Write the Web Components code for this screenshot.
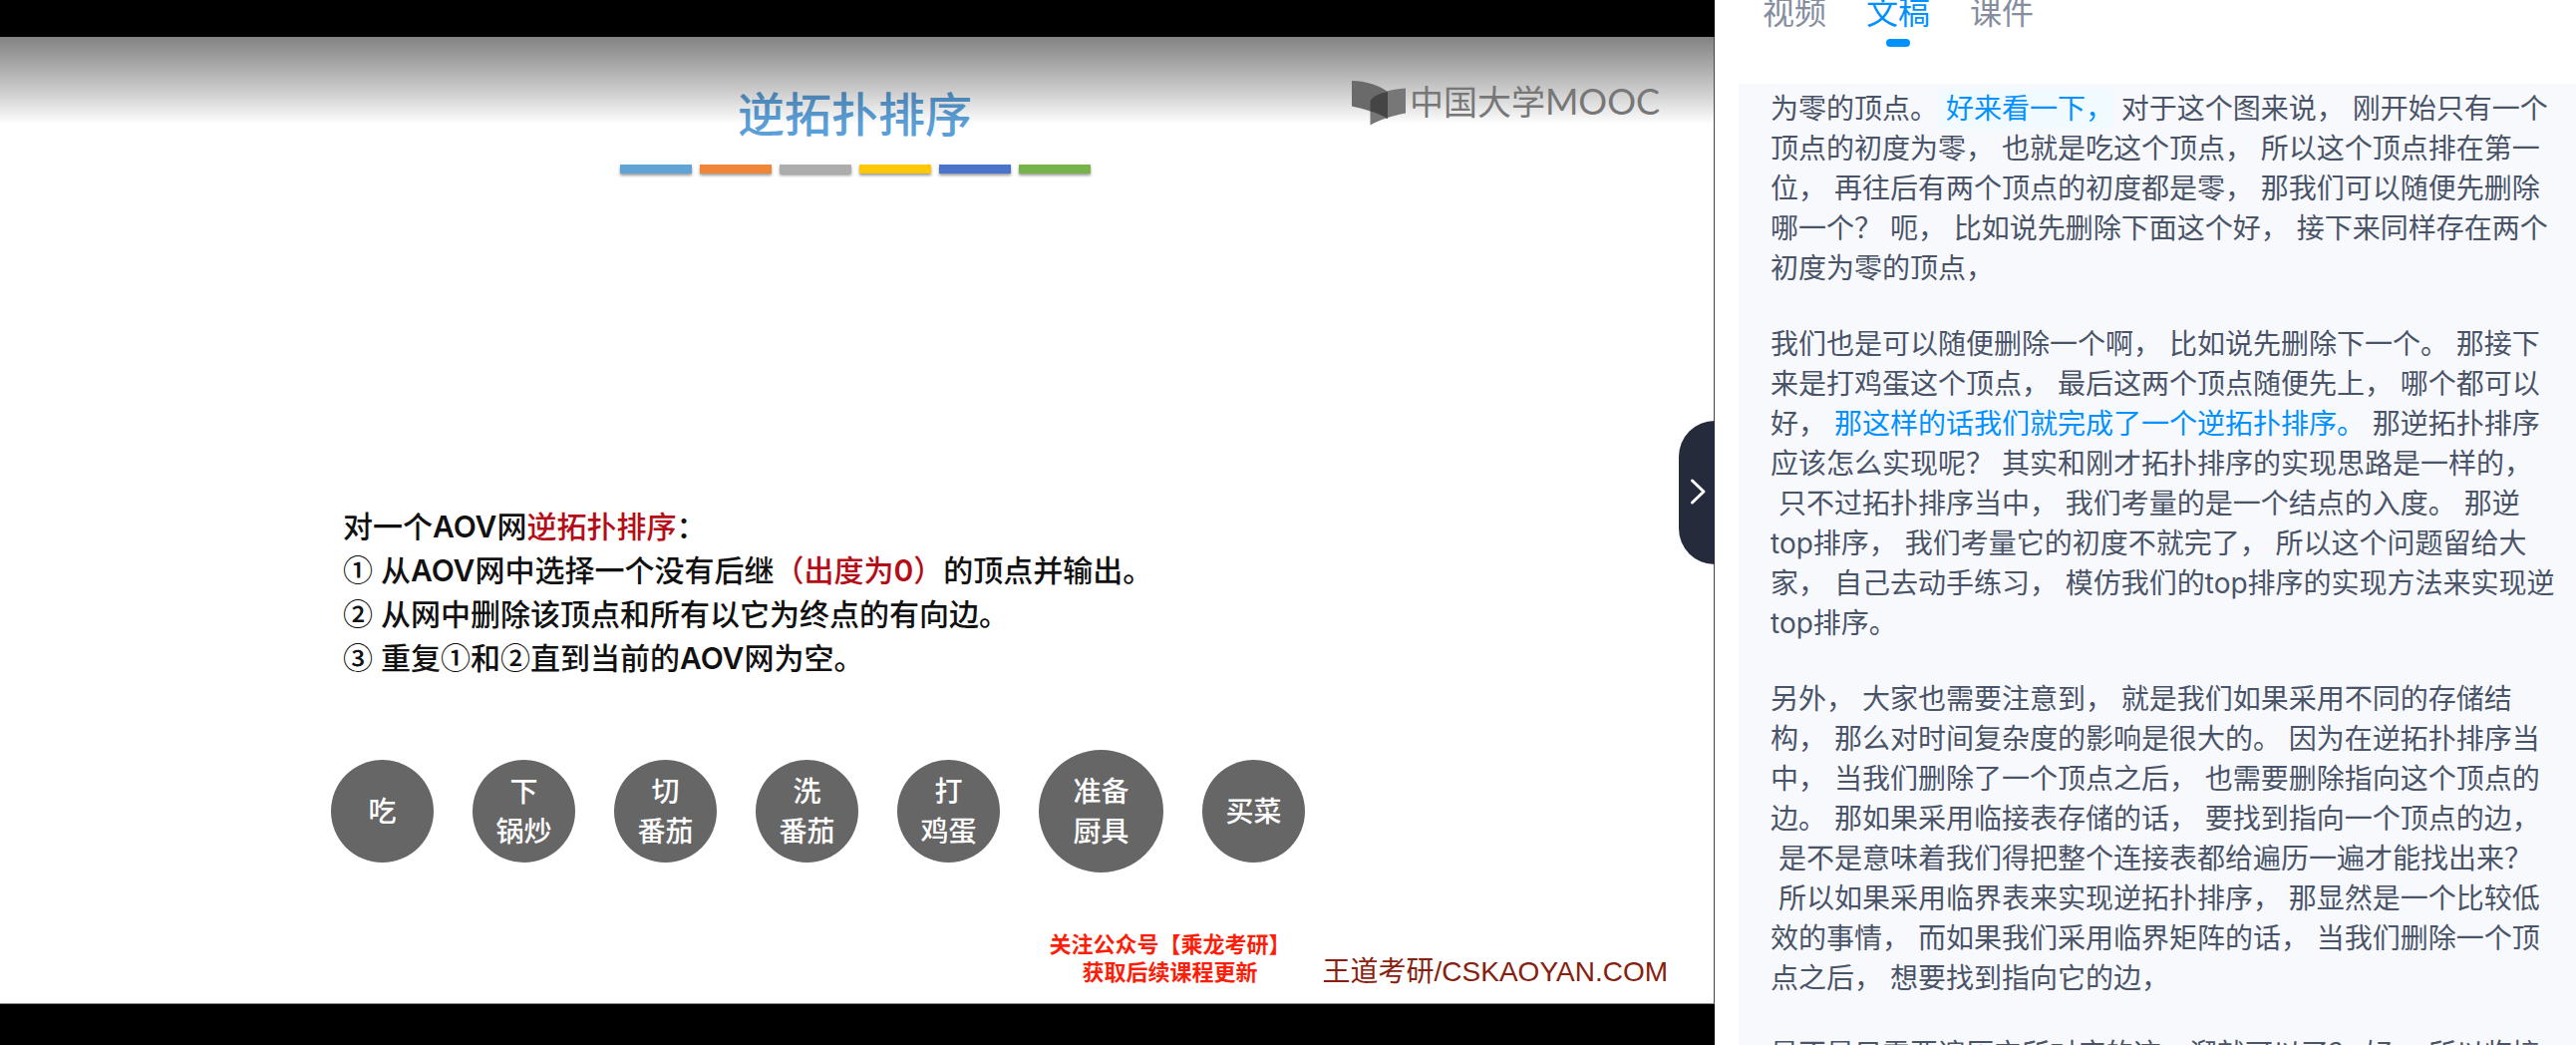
<!DOCTYPE html>
<html lang="zh-CN">
<head>
<meta charset="utf-8">
<title>逆拓扑排序</title>
<style>
  html, body { height: 100%; margin: 0; }
  body {
    overflow: hidden;
    background: #fff;
    font-family: Inter, "Noto Sans CJK SC", sans-serif;
    text-spacing-trim: space-all;
  }
</style>
</head>
<body>
<course-page>
  <lesson-player slot="player">
    <slide-title>逆拓扑排序</slide-title>
    <slide-steps></slide-steps>
    <node-row>
      <task-node>吃</task-node>
      <task-node>下<br>锅炒</task-node>
      <task-node>切<br>番茄</task-node>
      <task-node>洗<br>番茄</task-node>
      <task-node>打<br>鸡蛋</task-node>
      <task-node large>准备<br>厨具</task-node>
      <task-node>买菜</task-node>
    </node-row>
    <slide-footer></slide-footer>
    <mooc-logo slot="watermark"></mooc-logo>
    <collapse-handle slot="handle"></collapse-handle>
  </lesson-player>
  <side-tabs slot="side"></side-tabs>
  <transcript-panel slot="side"></transcript-panel>
</course-page>

<script>
const define = (name, html) => {
  const template = document.createElement('template');
  template.innerHTML = html;
  customElements.define(name, class extends HTMLElement {
    constructor() {
      super();
      this.attachShadow({ mode: 'open' }).append(template.content.cloneNode(true));
    }
  });
};

define('course-page', `
  <style>
    :host { display: grid; grid-template-columns: minmax(0, 1fr) 864px; height: 100vh; }
    main { display: flex; min-width: 0; }
    aside { display: flex; flex-direction: column; overflow: hidden; background: #fff; }
  </style>
  <main><slot name="player"></slot></main>
  <aside><slot name="side"></slot></aside>`);

define('lesson-player', `
  <style>
    :host { display: flex; flex: 1; position: relative; box-sizing: border-box; padding: 37px 0 41px; background: #000; }
    .slide {
      flex: 1; display: flex; flex-direction: column; position: relative;
      background: #fff; border-right: 1px solid #444; border-bottom: 1px solid #888;
    }
    .shade { position: absolute; inset: 0 0 auto; height: 88px; background: linear-gradient(rgba(0,0,0,.49), rgba(0,0,0,.2) 62%, rgba(0,0,0,0)); pointer-events: none; }
    .mark { position: absolute; top: 44px; right: 54px; }
    .handle { position: absolute; right: 0; top: 422px; }
  </style>
  <div class="slide">
    <slot></slot>
    <div class="shade"></div>
    <div class="mark"><slot name="watermark"></slot></div>
  </div>
  <div class="handle"><slot name="handle"></slot></div>`);

define('slide-title', `
  <style>
    :host { display: flex; flex-direction: column; align-items: center; gap: 22px; padding: 50px 4px 0 0; margin-bottom: auto; }
    h1 { margin: 0; font-size: 47px; line-height: 56px; font-weight: 500; color: #5b9fd8; }
    .bars { display: flex; gap: 8px; }
    .bars i { width: 72px; height: 9px; box-shadow: 0 2px 3px rgba(0,0,0,.4); }
  </style>
  <h1><slot></slot></h1>
  <div class="bars">
    <i style="background:#62a3d6"></i><i style="background:#ed8638"></i><i style="background:#adadad"></i>
    <i style="background:#fec707"></i><i style="background:#4a74c9"></i><i style="background:#77b34b"></i>
  </div>`);

define('slide-steps', `
  <style>
    :host { display: block; padding-left: 344px; font-size: 30px; line-height: 44px; font-weight: 500; color: #111; }
    p { margin: 0; white-space: nowrap; }
    b { font-weight: 600; }
    em { font-style: normal; color: #b30d17; }
    .n { font-family: "Noto Sans CJK SC", sans-serif; line-height: 30px; }
  </style>
  <p>对一个<b>AOV</b>网<em>逆拓扑排序</em>：</p>
  <p><span class="n">①</span> 从<b>AOV</b>网中选择一个没有后继<em>（出度为<b>0</b>）</em>的顶点并输出。</p>
  <p><span class="n">②</span> 从网中删除该顶点和所有以它为终点的有向边。</p>
  <p><span class="n">③</span> 重复<span class="n">①</span>和<span class="n">②</span>直到当前的<b>AOV</b>网为空。</p>`);

define('node-row', `
  <style>:host { display: flex; align-items: center; gap: 39px; padding: 70px 0 58px 332px; }</style>
  <slot></slot>`);

define('task-node', `
  <style>
    :host {
      display: flex; align-items: center; justify-content: center; flex: none;
      width: 103px; height: 103px; border-radius: 50%;
      background: #666; color: #fff; text-align: center;
      font-size: 28px; line-height: 40px; font-weight: 500;
    }
    :host([large]) { width: 125px; height: 123px; }
  </style>
  <span><slot></slot></span>`);

define('slide-footer', `
  <style>
    :host { display: flex; justify-content: flex-end; align-items: flex-end; gap: 32px; padding: 0 46px 17px 0; white-space: nowrap; }
    p { margin: 0; }
    .ad { font-size: 22px; line-height: 28px; font-weight: 700; text-align: center; color: #fb1e08; }
    .src { font-family: "Liberation Sans", "Noto Sans CJK SC", sans-serif; font-size: 28px; line-height: 28px; color: #86200f; }
  </style>
  <p class="ad">关注公众号【乘龙考研】<br>获取后续课程更新</p>
  <p class="src">王道考研/CSKAOYAN.COM</p>`);

define('mooc-logo', `
  <style>
    :host { display: flex; align-items: flex-start; gap: 4px; color: #777; font-family: "Noto Sans CJK SC", sans-serif; font-size: 34px; line-height: 40px; white-space: nowrap; }
    svg { display: block; width: 54px; height: 45px; }
    .en { font-family: Lato, sans-serif; font-size: 36px; line-height: 36px; }
  </style>
  <svg viewBox="0 0 54 45" aria-hidden="true">
    <path d="M0 0C14 0 26 4 36 11V38C25 32 13 28 0 25.500Z" fill="#6a6a6a"/>
    <path d="M18.500 20C25 11 39 9 54 7.500V32.500C40 35 28 39 18.500 44.500Z" fill="#777"/>
    <path d="M18.500 20C22 15 28 12.500 36 11V38C30 34.500 24 32 18.500 30.500Z" fill="#454545"/>
  </svg>
  <span>中国大学<span class="en">MOOC</span></span>`);

define('collapse-handle', `
  <style>
    :host { display: block; }
    button { display: flex; align-items: center; justify-content: center; width: 36px; height: 144px; padding: 0; border: 0; border-radius: 36px 0 0 36px; background: #252b3a; }
    svg { display: block; width: 24px; height: 30px; }
  </style>
  <button aria-label="收起">
    <svg viewBox="0 0 24 30" fill="none" stroke="#fff" stroke-width="3" stroke-linecap="round" stroke-linejoin="round"><path d="M7.500 3L19 14L7.500 25"/></svg>
  </button>`);

define('side-tabs', `
  <style>
    :host { display: flex; flex: none; gap: 40px; margin: -11px 0 37px; padding-left: 48px; }
    button { display: flex; flex-direction: column; align-items: center; gap: 2px; padding: 0; border: 0; background: none; font: inherit; font-size: 32px; line-height: 48px; color: #858d9e; }
    button::after { content: ""; width: 24px; height: 8px; border-radius: 4px; }
    .on { color: #0091ff; }
    .on::after { background: #0091ff; }
  </style>
  <button>视频</button><button class="on">文稿</button><button>课件</button>`);

define('transcript-panel', `
  <style>
    :host { display: flex; flex-direction: column; gap: 36px; flex: none; margin-left: 24px; padding: 5px 0 0 32px; background: #f8f9fd; font-size: 28px; line-height: 40px; color: #4a5468; }
    p { margin: 0; white-space: pre; }
    mark { background: none; color: #0091ff; }
    .hit { display: inline-block; background: #f1faff; }
  </style>
  <p>为零的顶点。<mark class="hit"> 好来看一下，</mark> 对于这个图来说， 刚开始只有一个
顶点的初度为零， 也就是吃这个顶点， 所以这个顶点排在第一
位， 再往后有两个顶点的初度都是零， 那我们可以随便先删除
哪一个？ 呃， 比如说先删除下面这个好， 接下来同样存在两个
初度为零的顶点，</p>
  <p>我们也是可以随便删除一个啊， 比如说先删除下一个。 那接下
来是打鸡蛋这个顶点， 最后这两个顶点随便先上， 哪个都可以
好，<mark> 那这样的话我们就完成了一个逆拓扑排序。</mark> 那逆拓扑排序
应该怎么实现呢？ 其实和刚才拓扑排序的实现思路是一样的，
 只不过拓扑排序当中， 我们考量的是一个结点的入度。 那逆
top排序， 我们考量它的初度不就完了， 所以这个问题留给大
家， 自己去动手练习， 模仿我们的top排序的实现方法来实现逆
top排序。</p>
  <p>另外， 大家也需要注意到， 就是我们如果采用不同的存储结
构， 那么对时间复杂度的影响是很大的。 因为在逆拓扑排序当
中， 当我们删除了一个顶点之后， 也需要删除指向这个顶点的
边。 那如果采用临接表存储的话， 要找到指向一个顶点的边，
 是不是意味着我们得把整个连接表都给遍历一遍才能找出来？
 所以如果采用临界表来实现逆拓扑排序， 那显然是一个比较低
效的事情， 而如果我们采用临界矩阵的话， 当我们删除一个顶
点之后， 想要找到指向它的边，</p>
  <p>是不是只需要遍历它所对应的这一溜就可以了？ 好， 所以临接</p>`);
</script>
</body>
</html>
